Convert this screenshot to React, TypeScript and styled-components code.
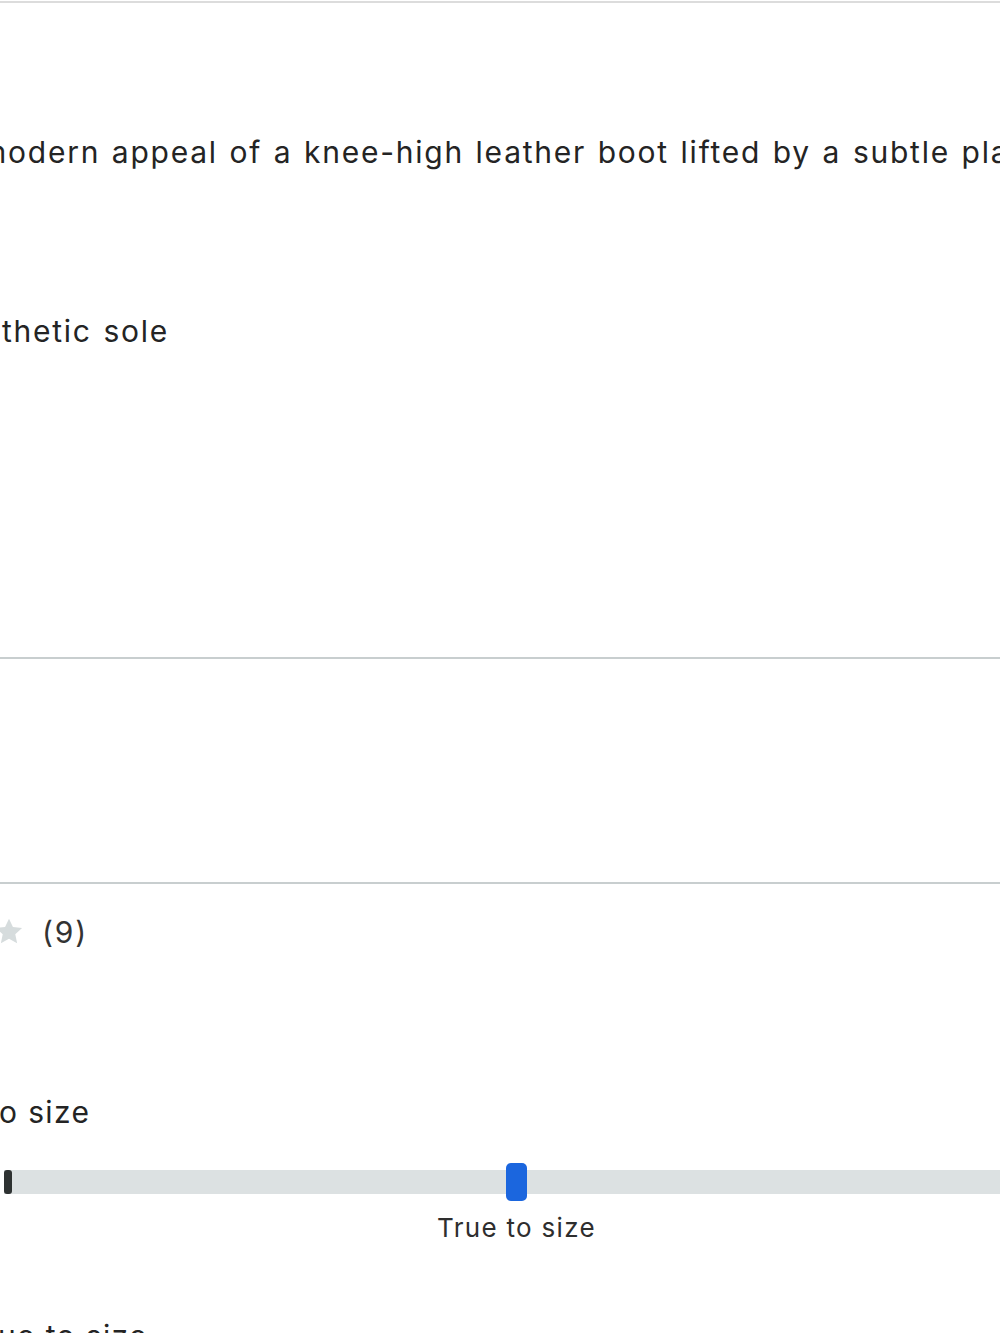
import React from "react";
import styled, { createGlobalStyle } from "styled-components";

const GlobalStyle = createGlobalStyle`
  html, body {
    margin: 0;
    padding: 0;
    background: #ffffff;
    overflow: hidden;
  }
  body {
    font-family: Inter, "Noto Sans", sans-serif;
    color: #242424;
  }
`;

const Page = styled.div`
  width: 1000px;
  height: 1330px;
  overflow: hidden;
  border-top: 2px solid #dcdcdc;
  margin-top: 1px;
`;

const Column = styled.div`
  display: flex;
  flex-direction: column;
  margin-left: -8px;
  width: 1100px;
`;

const Section = styled.section<{ $pad: string; $line?: boolean; $h?: number }>`
  display: flex;
  flex-direction: column;
  padding: ${(p) => p.$pad};
  height: ${(p) => (p.$h ? `${p.$h}px` : "auto")};
  box-sizing: content-box;
  border-bottom: ${(p) => (p.$line ? "2px solid #c8cecf" : "none")};
`;

const Text = styled.p<{ $indent?: number; $top?: number; $wide?: boolean }>`
  margin: ${(p) => p.$top ?? 0}px 0 0 ${(p) => p.$indent ?? 0}px;
  font-size: 30px;
  line-height: 36px;
  letter-spacing: ${(p) => (p.$wide ? "1.75px" : "1.35px")};
  word-spacing: ${(p) => (p.$wide ? "1.5px" : "0")};
  white-space: nowrap;
  color: #242424;
`;

const RatingRow = styled.div`
  display: flex;
  align-items: center;
  gap: 17px;
  height: 36px;
`;

const Count = styled.span`
  font-size: 30px;
  line-height: 36px;
  color: #333;
  letter-spacing: 1.8px;
`;

const FitScale = styled.div`
  display: flex;
  flex-direction: column;
  width: 1025px;
  margin: 40px 0 0 12px;
`;

const Track = styled.div`
  position: relative;
  height: 24px;
  background: #dce1e2;
`;

const EndMark = styled.span`
  position: absolute;
  left: 0;
  top: 0;
  width: 8px;
  height: 24px;
  border-radius: 3px;
  background: #2e3232;
`;

const Thumb = styled.span`
  position: absolute;
  left: 50%;
  top: -7px;
  width: 21px;
  height: 38px;
  margin-left: -11px;
  border-radius: 5px;
  background: #1b66de;
`;

const ScaleLabel = styled.span`
  margin-top: 16px;
  text-align: center;
  font-size: 26px;
  line-height: 36px;
  letter-spacing: 1.3px;
  color: #2e2e2e;
`;

const Star = () => (
  <svg
    width="32"
    height="32"
    viewBox="0 0 24 24"
    aria-hidden
    style={{ marginLeft: "1px" }}
  >
    <path
      d="M12 2l2.95 6.3 6.85.75-5.1 4.65 1.4 6.8L12 17.1l-6.1 3.4 1.4-6.8-5.1-4.65 6.85-.75z"
      fill="#d6dcdd"
    />
  </svg>
);

export default function App() {
  return (
    <>
      <GlobalStyle />
      <Page>
        <Column>
          <Section $pad="131px 0 308px 0" $line>
            <Text $wide $indent={-12}>
              modern appeal of a knee-high leather boot lifted by a subtle platform
            </Text>
            <Text $wide $indent={10} $top={143}>
              thetic sole
            </Text>
          </Section>
          <Section $pad="0" $h={223} $line />
          <Section $pad="30px 0 0 0">
            <RatingRow>
              <Star />
              <Count>(9)</Count>
            </RatingRow>
            <Text $indent={7} $top={144}>
              o size
            </Text>
            <FitScale>
              <Track>
                <EndMark />
                <Thumb />
              </Track>
              <ScaleLabel>True to size</ScaleLabel>
            </FitScale>
            <Text $indent={6} $top={72}>
              ue to size
            </Text>
          </Section>
        </Column>
      </Page>
    </>
  );
}
